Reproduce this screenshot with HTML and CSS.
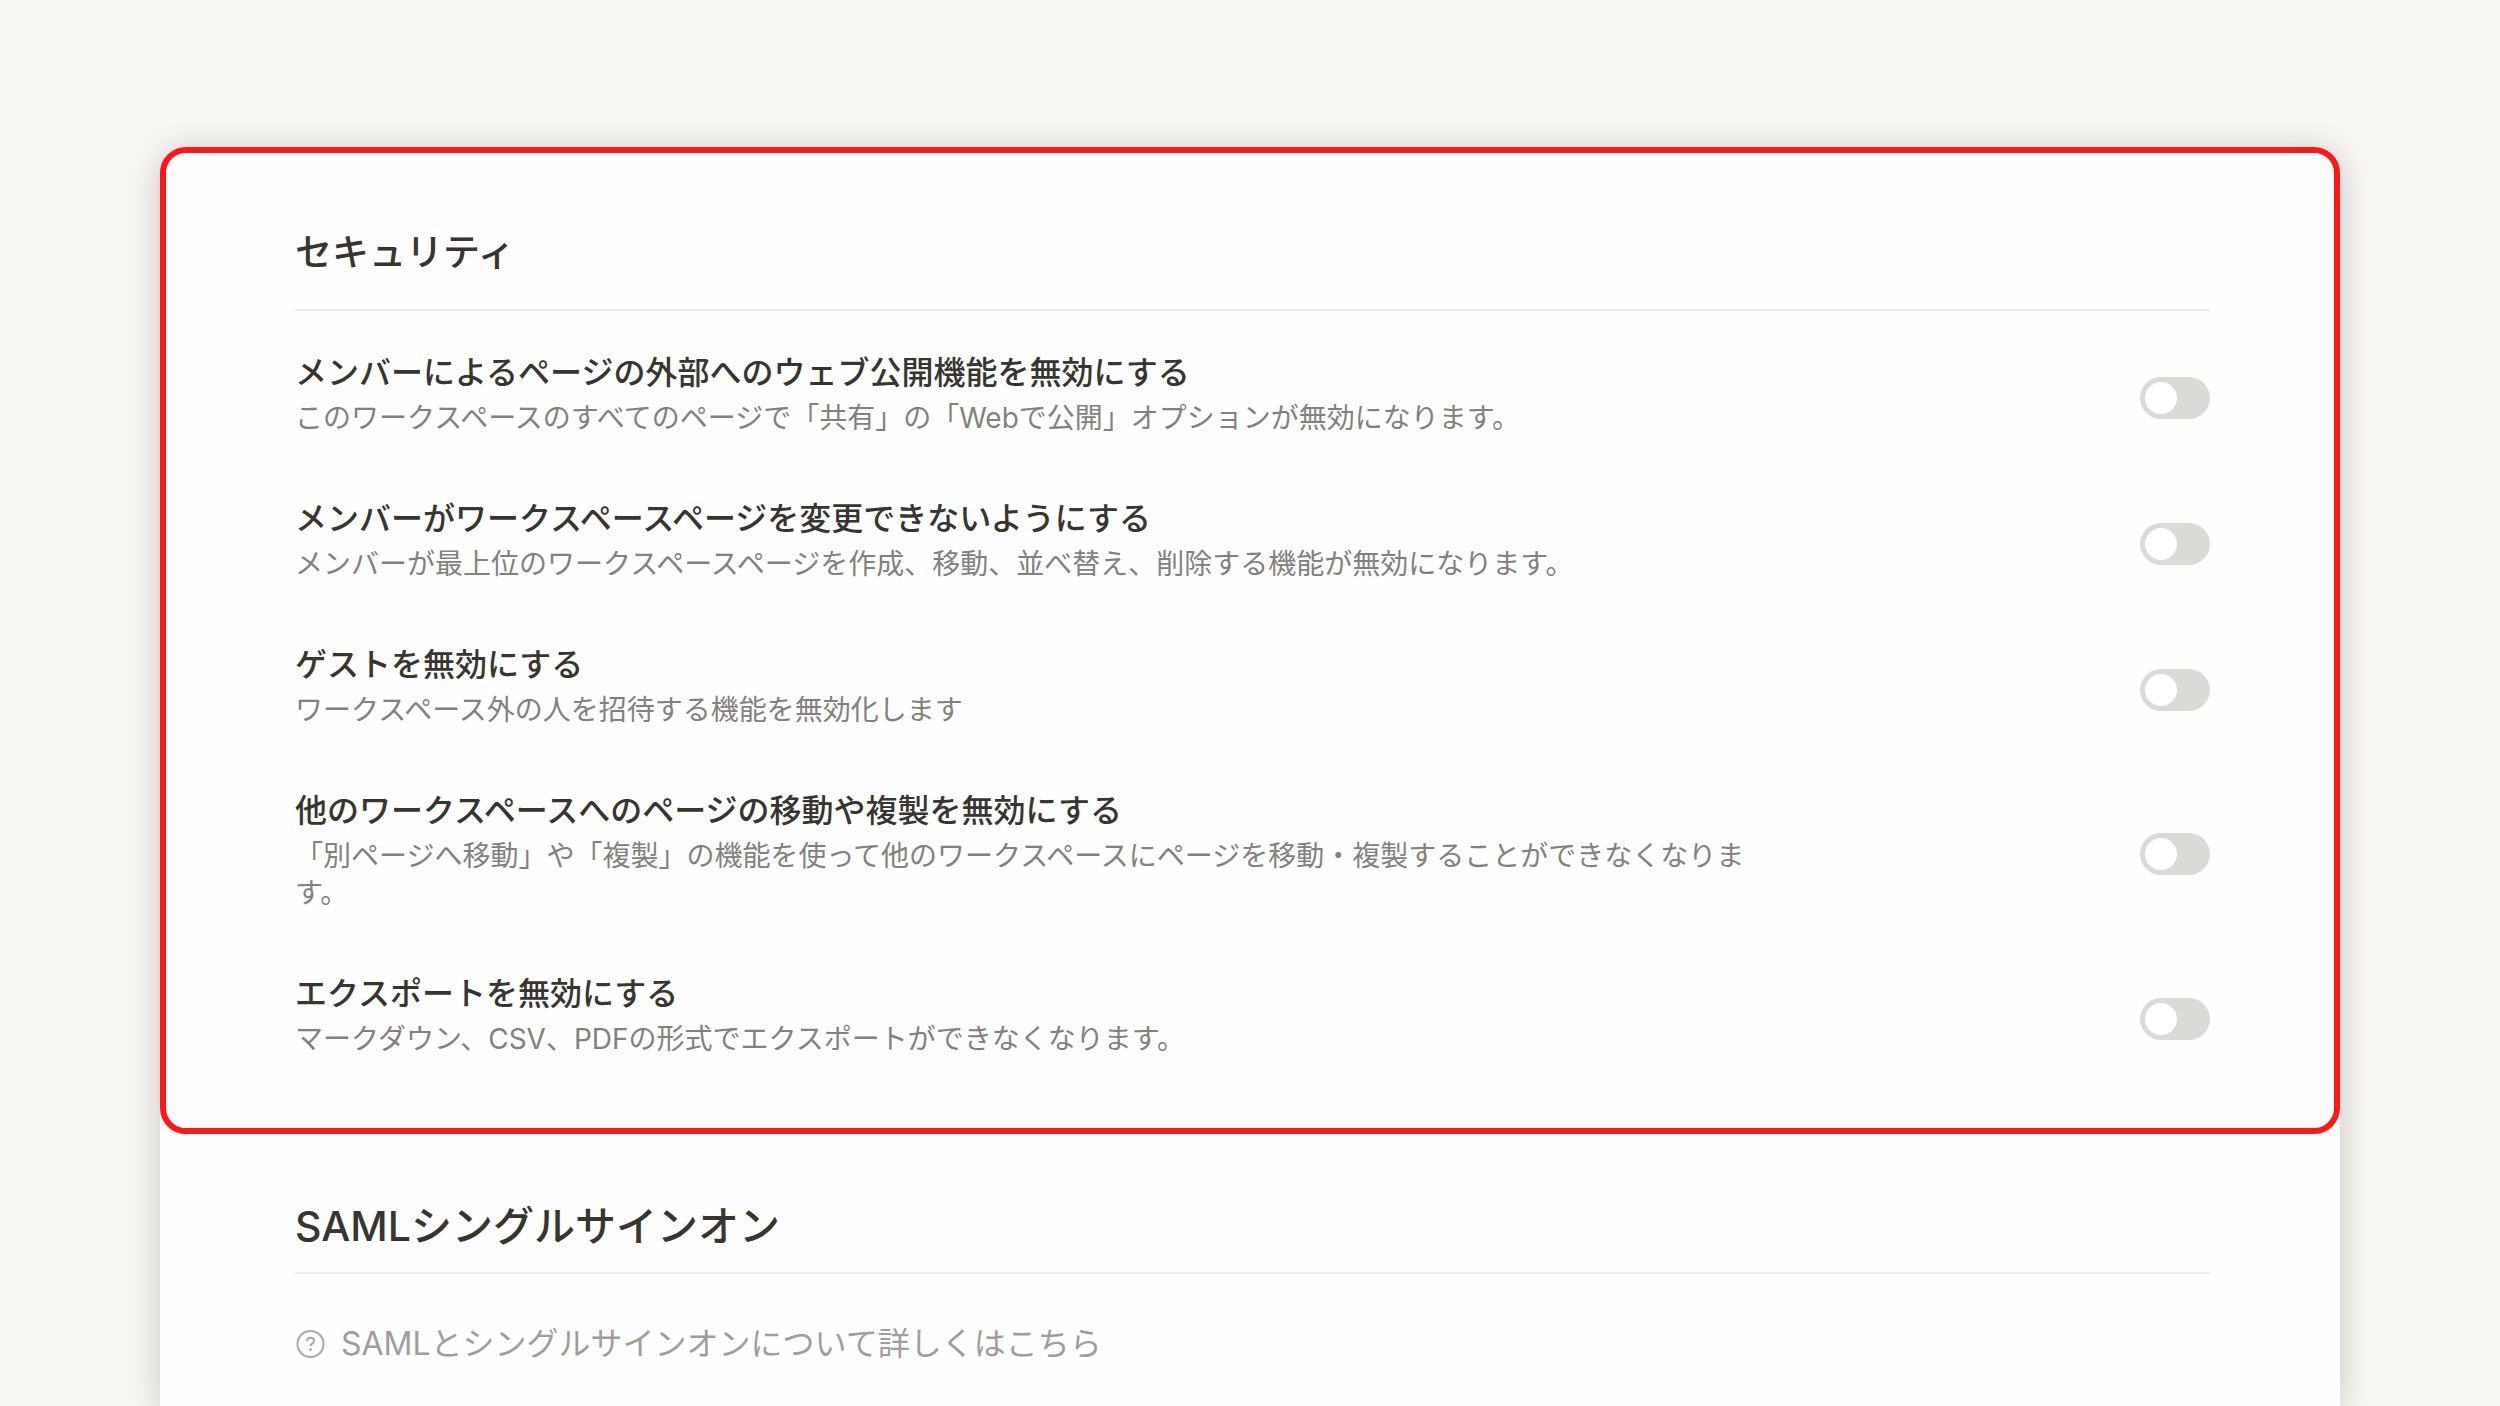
FILE: index.html
```
<!DOCTYPE html>
<html lang="ja">
<head>
<meta charset="UTF-8">
<meta name="viewport" content="width=device-width, initial-scale=1.0">
<title>セキュリティ</title>
<link rel="stylesheet" href="styles.css">
</head>
<body>
  <main class="card">
    <section class="security">
      <h2 class="security-title">セキュリティ</h2>
      <div class="settings">
        <div class="setting">
          <div class="setting-text">
            <label for="disablePublish">メンバーによるページの外部へのウェブ公開機能を無効にする</label>
            <p>このワークスペースのすべてのページで「共有」の「Webで公開」オプションが無効になります。</p>
          </div>
          <input type="checkbox" class="toggle" id="disablePublish">
        </div>
        <div class="setting">
          <div class="setting-text">
            <label for="disableEdit">メンバーがワークスペースページを変更できないようにする</label>
            <p>メンバーが最上位のワークスペースページを作成、移動、並べ替え、削除する機能が無効になります。</p>
          </div>
          <input type="checkbox" class="toggle" id="disableEdit">
        </div>
        <div class="setting">
          <div class="setting-text">
            <label for="disableGuests">ゲストを無効にする</label>
            <p>ワークスペース外の人を招待する機能を無効化します</p>
          </div>
          <input type="checkbox" class="toggle" id="disableGuests">
        </div>
        <div class="setting">
          <div class="setting-text">
            <label for="disableMove">他のワークスペースへのページの移動や複製を無効にする</label>
            <p>「別ページへ移動」や「複製」の機能を使って他のワークスペースにページを移動・複製することができなくなります。</p>
          </div>
          <input type="checkbox" class="toggle" id="disableMove">
        </div>
        <div class="setting">
          <div class="setting-text">
            <label for="disableExport">エクスポートを無効にする</label>
            <p>マークダウン、CSV、PDFの形式でエクスポートができなくなります。</p>
          </div>
          <input type="checkbox" class="toggle" id="disableExport">
        </div>
      </div>
    </section>

    <section class="saml">
      <h2 class="saml-title">SAMLシングルサインオン</h2>
      <a class="help-link" href="#">
        <svg class="help-icon" viewBox="0 0 30 30" aria-hidden="true">
          <circle cx="15.5" cy="15" r="13" />
          <path d="M12 12.1c.1-2.1 1.5-3.3 3.6-3.3s3.5 1.2 3.5 3c0 1.3-.7 2.1-1.9 2.8-1.2.8-1.6 1.3-1.6 2.5" />
          <circle class="dot" cx="15.5" cy="20.6" r="1.4" />
        </svg>
        <span>SAMLとシングルサインオンについて詳しくはこちら</span>
      </a>
    </section>
  </main>
</body>
</html>
```
FILE: styles.css
```
* {
  box-sizing: border-box;
}
body {
  margin: 0;
  min-height: 100vh;
  padding: 147px 6.4% 0;
  display: flex;
  flex-direction: column;
  background-color: #f7f6f2;
  color: #37352f;
  font-family: Inter, "Noto Sans CJK JP", sans-serif;
}
h2, p {
  margin: 0;
}
.card {
  flex: 1;
  background-color: #fefefe;
  border-radius: 26px 26px 0 0;
  box-shadow: 0 4px 32px rgba(15, 15, 15, 0.2);
}
.security {
  padding: 80px 124px 70px 129px;
  border: 6px solid #ff1717;
  border-radius: 26px;
}
.security-title {
  padding-bottom: 36px;
  border-bottom: 2px solid #ededec;
  font-size: 37px;
  font-weight: 500;
  line-height: 40px;
}
.settings {
  display: flex;
  flex-direction: column;
  gap: 67px;
  margin-top: 47px;
}
.setting {
  display: flex;
  align-items: center;
  justify-content: space-between;
}
.setting-text {
  display: flex;
  flex-direction: column;
  align-items: flex-start;
  gap: 12px;
  width: 77%;
}
.setting-text label {
  font-size: 32px;
  font-weight: 500;
  line-height: 30px;
  cursor: pointer;
}
.setting-text p {
  color: #82817d;
  font-size: 28px;
  line-height: 37px;
}
.toggle {
  appearance: none;
  flex: none;
  display: flex;
  width: 70px;
  height: 42px;
  margin: 0;
  padding: 5px;
  border-radius: 21px;
  background-color: #dadad6;
  cursor: pointer;
}
.toggle::before {
  content: "";
  width: 32px;
  height: 32px;
  border-radius: 50%;
  background-color: #ffffff;
}
.toggle:checked {
  justify-content: flex-end;
  background-color: #2383e2;
}
.saml {
  padding: 68px 130px 38px 135px;
}
.saml-title {
  padding-bottom: 22px;
  border-bottom: 2px solid #ededec;
  font-size: 41px;
  font-weight: 500;
  line-height: 48px;
}
.help-link {
  display: flex;
  align-items: center;
  gap: 16px;
  margin-top: 46px;
  color: #9f9e9a;
  font-size: 32px;
  line-height: 48px;
  text-decoration: none;
}
.help-icon {
  width: 30px;
  height: 30px;
  fill: none;
  stroke: #aaa9a6;
  stroke-width: 2;
}
.help-icon .dot {
  fill: #aaa9a6;
  stroke: none;
}
```
